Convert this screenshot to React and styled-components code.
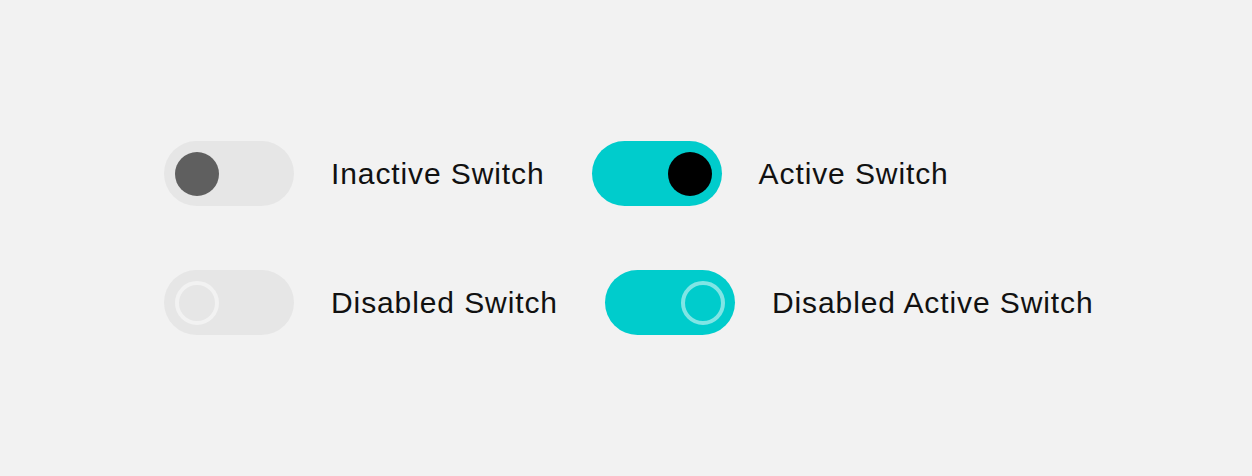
import React, { useState } from "react";
import styled, { createGlobalStyle, css } from "styled-components";

const GlobalStyle = createGlobalStyle`
  html, body {
    margin: 0;
    padding: 0;
    background: #f2f2f2;
  }
  body {
    font-family: "Liberation Sans", Arial, sans-serif;
    color: #111;
  }
`;

const Page = styled.main`
  min-height: 476px;
  box-sizing: border-box;
  padding: 141px 0 0 164px;
  display: flex;
  flex-direction: column;
  gap: 64px;
`;

const Row = styled.div`
  display: flex;
  align-items: center;
  gap: 47px;
`;

const Item = styled.label`
  display: flex;
  align-items: center;
  gap: 37px;
  cursor: ${(p) => (p.disabled ? "default" : "pointer")};
`;

const Track = styled.span`
  position: relative;
  display: block;
  width: 130px;
  height: 65px;
  border-radius: 33px;
  background: ${(p) => (p.on ? "#00cccc" : "#e6e6e6")};
  transition: background 0.2s;
`;

const Knob = styled.span`
  position: absolute;
  top: 10.5px;
  left: ${(p) => (p.on ? "76px" : "11px")};
  width: 44px;
  height: 44px;
  box-sizing: border-box;
  border-radius: 50%;
  background: ${(p) => (p.on ? "#000" : "#5f5f5f")};
  transition: left 0.2s;
  ${(p) =>
    p.disabled &&
    css`
      background: transparent;
      border: 4px solid ${p.on ? "#80e5e5" : "#f2f2f2"};
    `}
`;

const Text = styled.span`
  font-size: 30px;
  letter-spacing: 0.9px;
  line-height: 1;
  white-space: nowrap;
`;

function Switch({ label, initial, disabled }) {
  const [on, setOn] = useState(initial);
  return (
    <Item disabled={disabled} onClick={() => !disabled && setOn(!on)}>
      <Track on={on ? 1 : 0}>
        <Knob on={on ? 1 : 0} disabled={disabled} />
      </Track>
      <Text>{label}</Text>
    </Item>
  );
}

export default function App() {
  return (
    <>
      <GlobalStyle />
      <Page>
        <Row>
          <Switch label="Inactive Switch" initial={false} />
          <Switch label="Active Switch" initial={true} />
        </Row>
        <Row>
          <Switch label="Disabled Switch" initial={false} disabled />
          <Switch label="Disabled Active Switch" initial={true} disabled />
        </Row>
      </Page>
    </>
  );
}
